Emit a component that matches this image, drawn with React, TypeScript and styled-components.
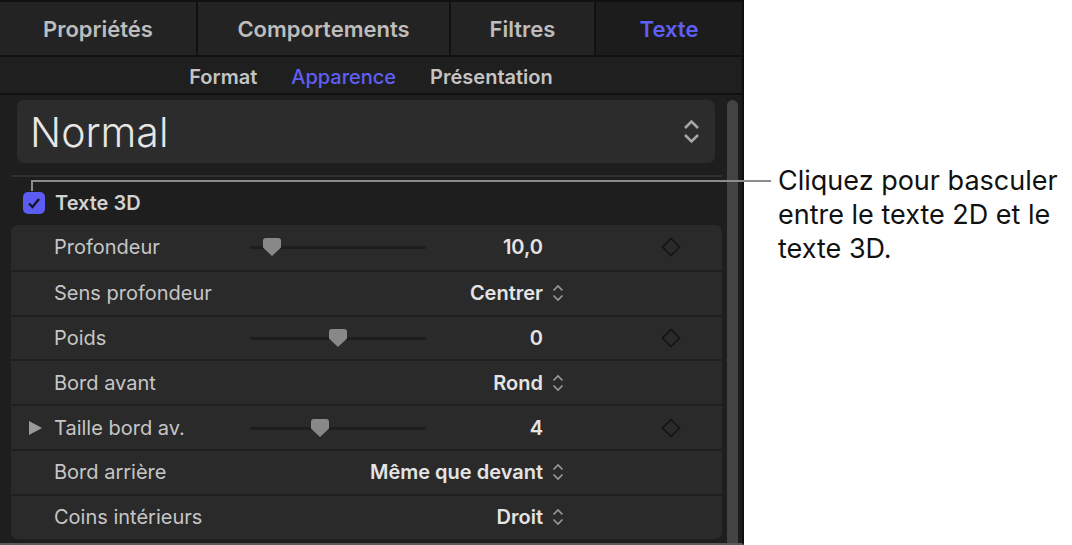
import styled, { createGlobalStyle } from "styled-components";

const GlobalStyle = createGlobalStyle`
  *, *::before, *::after {
    box-sizing: border-box;
  }
  html, body {
    margin: 0;
    padding: 0;
    background: #ffffff;
  }
  body {
    font-family: Inter, "Liberation Sans", sans-serif;
  }
`;

const Page = styled.div`
  position: relative;
  display: flex;
  width: 1072px;
  height: 545px;
  overflow: hidden;
`;

const Panel = styled.div`
  width: 744px;
  height: 545px;
  flex-shrink: 0;
  display: flex;
  flex-direction: column;
  background: #1e1e1e;
  border-right: 2px solid #0e0e0e;
  border-bottom: 2px solid #5a5a5a;
`;

const TabBar = styled.div`
  display: flex;
  height: 57px;
  border-top: 2px solid #111;
  border-bottom: 2px solid #111;
`;

const Tab = styled.div<{ $w?: number; $active?: boolean }>`
  ${(p) => (p.$w ? `width: ${p.$w}px;` : "flex: 1;")}
  display: flex;
  align-items: center;
  justify-content: center;
  background: ${(p) => (p.$active ? "#1c1c1c" : "#232323")};
  border-right: ${(p) => (p.$active ? "none" : "2px solid #111")};
  color: ${(p) => (p.$active ? "#5f5ff6" : "#bdbdbd")};
  font-size: 22px;
  font-weight: 600;
`;

const SubTabs = styled.div`
  display: flex;
  justify-content: center;
  align-items: center;
  gap: 34px;
  height: 38px;
  padding-top: 4px;
  background: #1f1f1f;
  border-bottom: 2px solid #101010;
`;

const SubTab = styled.div<{ $active?: boolean }>`
  color: ${(p) => (p.$active ? "#5f5ff6" : "#c4c4c4")};
  font-size: 20px;
  font-weight: ${(p) => (p.$active ? 500 : 600)};
`;

const Body = styled.div`
  flex: 1;
  display: flex;
  overflow: hidden;
`;

const Main = styled.div`
  flex: 1;
  display: flex;
  flex-direction: column;
  padding: 5px 5px 0 11px;
`;

const ScrollTrack = styled.div`
  width: 15px;
  padding: 5px 4px 0 0;
  display: flex;
  background: #1c1c1c;
`;

const ScrollThumb = styled.div`
  width: 11px;
  flex: 1;
  background: #434343;
  border-radius: 6px 6px 0 0;
`;

const Popup = styled.div`
  height: 63px;
  flex-shrink: 0;
  margin: 0 7px 0 6px;
  padding: 0 15px 0 13px;
  display: flex;
  align-items: center;
  justify-content: space-between;
  background: #2c2c2c;
  border-radius: 7px;
`;

const PopupText = styled.div`
  color: #e6e6e6;
  font-size: 41px;
  font-weight: 300;
`;

const Separator = styled.div`
  height: 2px;
  flex-shrink: 0;
  margin-top: 12px;
  background: #303030;
`;

const CheckRow = styled.div`
  height: 48px;
  flex-shrink: 0;
  display: flex;
  align-items: center;
  gap: 10px;
  padding: 3px 0 0 12px;
`;

const Checkbox = styled.div`
  width: 22px;
  height: 22px;
  border-radius: 5px;
  background: #5c5cf2;
  display: flex;
  align-items: center;
  justify-content: center;
`;

const CheckLabel = styled.div`
  color: #d2d2d2;
  font-size: 20px;
  font-weight: 600;
`;

const Group = styled.div`
  background: #2a2a2a;
  border-radius: 7px;
`;

const Row = styled.div`
  height: 44.8px;
  display: grid;
  grid-template-columns: 43px 196px 176px 117px 32px 1fr;
  align-items: center;
  & + & {
    border-top: 2px solid #1f1f1f;
  }
`;

const Disclosure = styled.div`
  padding-left: 18px;
  display: flex;
`;

const Label = styled.div`
  color: #c6c6c6;
  font-size: 20px;
  white-space: nowrap;
`;

const Slider = styled.div<{ $hidden?: boolean }>`
  position: relative;
  height: 18px;
  visibility: ${(p) => (p.$hidden ? "hidden" : "visible")};
  &::before {
    content: "";
    position: absolute;
    left: 0;
    right: 0;
    top: 8px;
    height: 3px;
    border-radius: 2px;
    background: #1d1d1d;
  }
`;

const Thumb = styled.svg<{ $pos: number }>`
  position: absolute;
  top: 0;
  left: ${(p) => p.$pos * 176 - 9}px;
`;

const Value = styled.div`
  justify-self: end;
  color: #e4e4e4;
  font-size: 20px;
  font-weight: 600;
  white-space: nowrap;
`;

const Chevrons = styled.div`
  padding-left: 9px;
  display: flex;
`;

const Keyframe = styled.div`
  margin-left: 86px;
  display: flex;
`;

const CalloutLine = styled.div`
  position: absolute;
  left: 31px;
  top: 180px;
  width: 740px;
  height: 11px;
  border-top: 2px solid #8c8c8c;
  border-left: 2px solid #8c8c8c;
`;

const Callout = styled.div`
  margin-left: 34px;
  padding-top: 164px;
  color: #111;
  font-size: 27px;
  line-height: 34px;
  white-space: nowrap;
`;

type RowData = {
  label: string;
  slider?: number;
  value: string;
  popup?: boolean;
  disclosure?: boolean;
};

const rows: RowData[] = [
  { label: "Profondeur", slider: 0.125, value: "10,0" },
  { label: "Sens profondeur", value: "Centrer", popup: true },
  { label: "Poids", slider: 0.5, value: "0" },
  { label: "Bord avant", value: "Rond", popup: true },
  { label: "Taille bord av.", slider: 0.4, value: "4", disclosure: true },
  { label: "Bord arrière", value: "Même que devant", popup: true },
  { label: "Coins intérieurs", value: "Droit", popup: true },
];

function SmallChevron() {
  return (
    <svg width="12" height="18" viewBox="0 0 12 18" fill="none">
      <path d="M1.5 6.5 L6 2 L10.5 6.5" stroke="#9a9a9a" strokeWidth="1.6" />
      <path d="M1.5 11.5 L6 16 L10.5 11.5" stroke="#9a9a9a" strokeWidth="1.6" />
    </svg>
  );
}

function Diamond() {
  return (
    <svg width="20" height="20" viewBox="0 0 20 20" fill="none">
      <path d="M10 1.5 L18.5 10 L10 18.5 L1.5 10 Z" stroke="#141414" strokeWidth="1.6" />
    </svg>
  );
}

function ParamRow({ row }: { row: RowData }) {
  return (
    <Row>
      <Disclosure>
        {row.disclosure && (
          <svg width="13" height="14" viewBox="0 0 13 14">
            <path d="M0 0 L13 7 L0 14 Z" fill="#9a9a9a" />
          </svg>
        )}
      </Disclosure>
      <Label>{row.label}</Label>
      <Slider $hidden={row.slider === undefined}>
        <Thumb $pos={row.slider ?? 0} width="18" height="18" viewBox="0 0 18 18">
          <path d="M3 0 H15 Q18 0 18 3 V9.5 L9 18 L0 9.5 V3 Q0 0 3 0 Z" fill="#888" />
        </Thumb>
      </Slider>
      <Value>{row.value}</Value>
      <Chevrons>{row.popup && <SmallChevron />}</Chevrons>
      {!row.popup ? (
        <Keyframe>
          <Diamond />
        </Keyframe>
      ) : (
        <div />
      )}
    </Row>
  );
}

export default function App() {
  return (
    <>
      <GlobalStyle />
      <Page>
        <Panel>
          <TabBar>
            <Tab $w={198}>Propriétés</Tab>
            <Tab $w={253}>Comportements</Tab>
            <Tab $w={145}>Filtres</Tab>
            <Tab $active>Texte</Tab>
          </TabBar>
          <SubTabs>
            <SubTab>Format</SubTab>
            <SubTab $active>Apparence</SubTab>
            <SubTab>Présentation</SubTab>
          </SubTabs>
          <Body>
            <Main>
              <Popup>
                <PopupText>Normal</PopupText>
                <svg width="17" height="25" viewBox="0 0 17 25" fill="none">
                  <path d="M2 9 L8.5 2.5 L15 9" stroke="#a6a6a6" strokeWidth="2.6" />
                  <path d="M2 16 L8.5 22.5 L15 16" stroke="#a6a6a6" strokeWidth="2.6" />
                </svg>
              </Popup>
              <Separator />
              <CheckRow>
                <Checkbox>
                  <svg width="16" height="16" viewBox="0 0 16 16" fill="none">
                    <path d="M3 8.5 L6.5 12 L13 4" stroke="#16162a" strokeWidth="2.4" />
                  </svg>
                </Checkbox>
                <CheckLabel>Texte 3D</CheckLabel>
              </CheckRow>
              <Group>
                {rows.map((r) => (
                  <ParamRow key={r.label} row={r} />
                ))}
              </Group>
            </Main>
            <ScrollTrack>
              <ScrollThumb />
            </ScrollTrack>
          </Body>
        </Panel>
        <CalloutLine />
        <Callout>
          Cliquez pour basculer
          <br />
          entre le texte 2D et le
          <br />
          texte 3D.
        </Callout>
      </Page>
    </>
  );
}
